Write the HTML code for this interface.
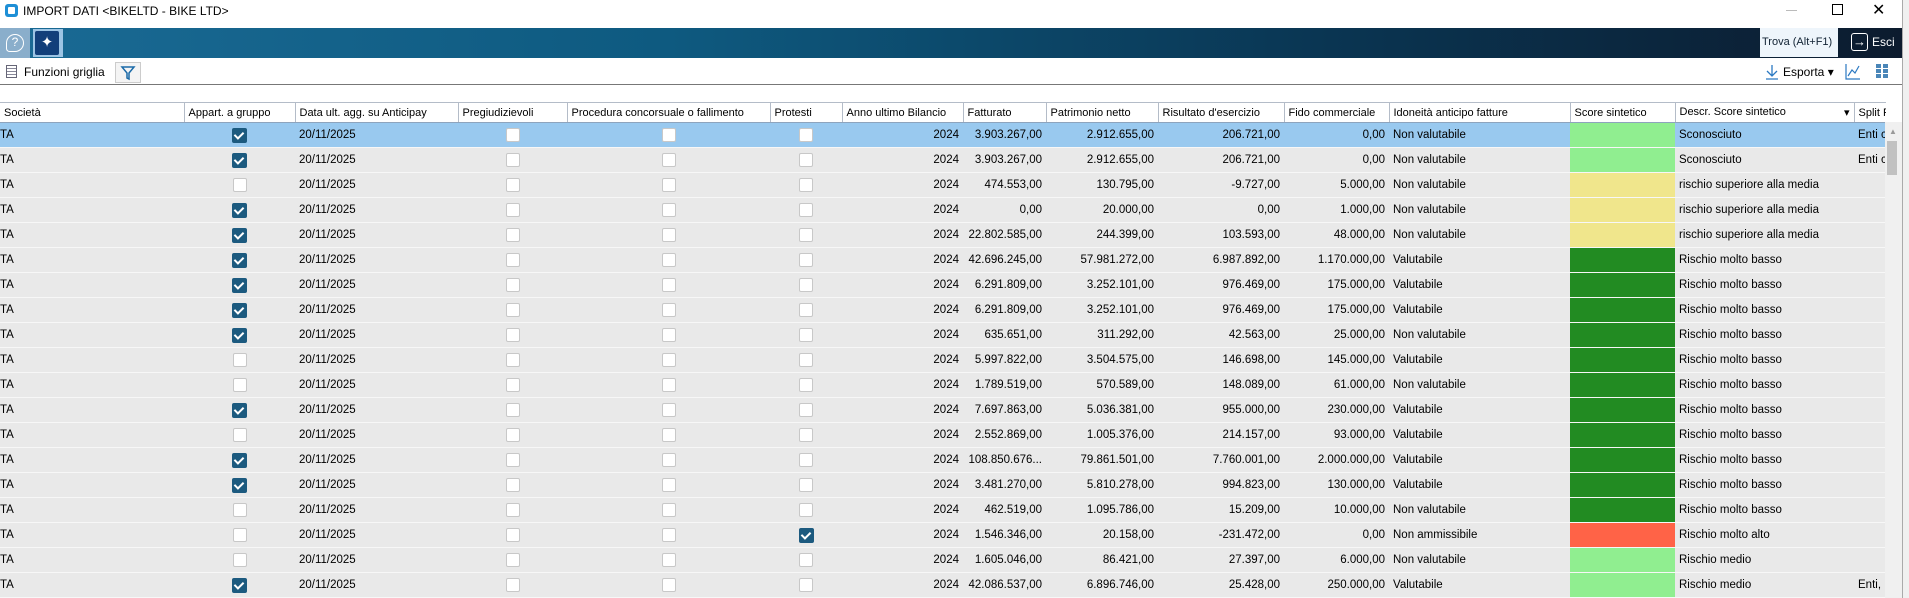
<!DOCTYPE html>
<html><head><meta charset="utf-8"><style>
*{margin:0;padding:0;box-sizing:border-box}
body{width:1909px;height:598px;overflow:hidden;background:#fff;font-family:"Liberation Sans",Arial,sans-serif;font-size:12px;color:#000;position:relative}
.abs{position:absolute;white-space:nowrap}
#band{left:0;top:28px;width:1902px;height:30px;background:linear-gradient(90deg,#1a6a94 0%,#0e5a80 35%,#0a3552 70%,#0c1b2e 100%)}
table{position:absolute;left:0;top:102px;border-collapse:collapse;table-layout:fixed;width:1886px}
th{height:20px;font-weight:normal;text-align:left;padding:0 4px;border-right:1px solid #b4bcc8;border-top:1px solid #b4bcc8;border-bottom:1px solid #8ea4bd;white-space:nowrap;overflow:hidden;background:#fff;font-size:11px}
td{height:25px;background:#e9e9e9;border-bottom:1px solid #f7f7f7;padding:0 4px;white-space:nowrap;overflow:hidden;font-size:11.5px;vertical-align:middle}
td:first-child{padding-left:0}
tr.sel td{background:#99c9ef}
.r{text-align:right}
.c{text-align:center;padding:0}
.cb{display:inline-block;width:14px;height:14px;border:1px solid #c8c8c8;background:#fff;border-radius:2px;vertical-align:middle}
.ck{display:inline-block;width:15px;height:15px;background:#1c5a7f;border-radius:2px;vertical-align:middle;position:relative}
.ck:after{content:"";position:absolute;left:4px;top:2px;width:4px;height:7px;border:solid #fff;border-width:0 2px 2px 0;transform:rotate(45deg)}
.lg{background:#90ee90!important}.kh{background:#f0e68c!important}.fg{background:#228b22!important}.tm{background:#ff6347!important}
</style></head><body>
<div class="abs" style="left:5px;top:4px;width:13px;height:13px;background:#1e8fd6;border-radius:3px"></div>
<div class="abs" style="left:8px;top:7px;width:7px;height:7px;background:#fff;border-radius:1px"></div>
<div class="abs" style="left:23px;top:4px;font-size:12px">IMPORT DATI &lt;BIKELTD - BIKE LTD&gt;</div>
<div class="abs" style="left:1786px;top:10px;width:11px;height:1px;background:#bbb"></div>
<div class="abs" style="left:1832px;top:4px;width:11px;height:11px;border:1px solid #000"></div>
<div class="abs" style="left:1872px;top:0px;font-size:16px">✕</div>
<div id="band" class="abs"></div>
<div class="abs" style="left:0;top:28px;width:30px;height:30px;background:#8aaecb"></div>
<div class="abs" style="left:6px;top:34px;width:18px;height:18px;border:1.5px solid #fff;border-radius:50% 50% 50% 20%;color:#fff;font-size:12px;text-align:center;line-height:15px">?</div>
<div class="abs" style="left:33px;top:29px;width:30px;height:28px;background:#9cc4e4"></div>
<div class="abs" style="left:35px;top:31px;width:24px;height:24px;background:#123f7a;border-radius:2px;color:#fff;font-size:15px;text-align:center;line-height:24px">✦</div>
<div class="abs" style="left:1760px;top:28px;width:78px;height:29px;background:#eef5fb;color:#123;line-height:29px;padding-left:2px;font-size:11px">Trova (Alt+F1)</div>
<div class="abs" style="left:1851px;top:33px;width:17px;height:18px;border:1.5px solid #fff;border-radius:3px;color:#fff;font-size:13px;line-height:15px;text-align:center">→</div>
<div class="abs" style="left:1872px;top:35px;color:#fff;font-size:12px">Esci</div>
<div class="abs" style="left:1902px;top:0;width:7px;height:598px;background:#f0f0f0;border-left:1px solid #aaa"></div>
<div class="abs" style="left:6px;top:65px;width:11px;height:13px;border:1px solid #667;background:repeating-linear-gradient(#fff 0 2px,#889 2px 3px)"></div>
<div class="abs" style="left:24px;top:65px;font-size:12px">Funzioni griglia</div>
<div class="abs" style="left:115px;top:62px;width:26px;height:21px;border:1px solid #ccc;background:#f4f4f4"></div>
<svg class="abs" style="left:120px;top:65px" width="16" height="16"><path d="M2 2h12l-5 6v6l-2-1V8z" fill="none" stroke="#1a6aa8" stroke-width="1.5"/></svg>
<svg class="abs" style="left:1765px;top:64px" width="14" height="16"><path d="M7 1v11M2 7l5 5 5-5M1 15h12" fill="none" stroke="#2b79c2" stroke-width="1.3"/></svg>
<div class="abs" style="left:1783px;top:65px;font-size:12px">Esporta ▾</div>
<svg class="abs" style="left:1845px;top:63px" width="16" height="18"><path d="M1 1v15h14M3 13l4-6 3 3 4-7" fill="none" stroke="#2b79c2" stroke-width="1.2"/></svg>
<svg class="abs" style="left:1876px;top:64px" width="14" height="15"><g fill="#4a86b8"><rect x="0" y="0" width="5" height="4"/><rect x="7" y="0" width="5" height="4"/><rect x="0" y="5" width="5" height="4"/><rect x="7" y="5" width="5" height="4"/><rect x="0" y="10" width="5" height="4"/><rect x="7" y="10" width="5" height="4"/></g></svg>
<div class="abs" style="left:0;top:84px;width:1902px;height:1px;background:#777"></div>
<table>
<colgroup><col style="width:184px"><col style="width:111px"><col style="width:163px"><col style="width:109px"><col style="width:203px"><col style="width:72px"><col style="width:121px"><col style="width:83px"><col style="width:112px"><col style="width:126px"><col style="width:105px"><col style="width:181px"><col style="width:105px"><col style="width:179px"><col style="width:32px"></colgroup>
<tr><th>Società</th><th>Appart. a gruppo</th><th>Data ult. agg. su Anticipay</th><th>Pregiudizievoli</th><th>Procedura concorsuale o fallimento</th><th>Protesti</th><th>Anno ultimo Bilancio</th><th>Fatturato</th><th>Patrimonio netto</th><th>Risultato d'esercizio</th><th>Fido commerciale</th><th>Idoneità anticipo fatture</th><th>Score sintetico</th><th>Descr. Score sintetico<span style="float:right">▾</span></th><th style="border-right:none">Split Pay</th></tr>
<tr class="sel"><td>TA</td><td class="c"><span class="ck"></span></td><td>20/11/2025</td><td class="c"><span class="cb"></span></td><td class="c"><span class="cb"></span></td><td class="c"><span class="cb"></span></td><td class="r">2024</td><td class="r">3.903.267,00</td><td class="r">2.912.655,00</td><td class="r">206.721,00</td><td class="r">0,00</td><td>Non valutabile</td><td class="lg"></td><td>Sconosciuto</td><td>Enti c</td></tr>
<tr><td>TA</td><td class="c"><span class="ck"></span></td><td>20/11/2025</td><td class="c"><span class="cb"></span></td><td class="c"><span class="cb"></span></td><td class="c"><span class="cb"></span></td><td class="r">2024</td><td class="r">3.903.267,00</td><td class="r">2.912.655,00</td><td class="r">206.721,00</td><td class="r">0,00</td><td>Non valutabile</td><td class="lg"></td><td>Sconosciuto</td><td>Enti c</td></tr>
<tr><td>TA</td><td class="c"><span class="cb"></span></td><td>20/11/2025</td><td class="c"><span class="cb"></span></td><td class="c"><span class="cb"></span></td><td class="c"><span class="cb"></span></td><td class="r">2024</td><td class="r">474.553,00</td><td class="r">130.795,00</td><td class="r">-9.727,00</td><td class="r">5.000,00</td><td>Non valutabile</td><td class="kh"></td><td>rischio superiore alla media</td><td></td></tr>
<tr><td>TA</td><td class="c"><span class="ck"></span></td><td>20/11/2025</td><td class="c"><span class="cb"></span></td><td class="c"><span class="cb"></span></td><td class="c"><span class="cb"></span></td><td class="r">2024</td><td class="r">0,00</td><td class="r">20.000,00</td><td class="r">0,00</td><td class="r">1.000,00</td><td>Non valutabile</td><td class="kh"></td><td>rischio superiore alla media</td><td></td></tr>
<tr><td>TA</td><td class="c"><span class="ck"></span></td><td>20/11/2025</td><td class="c"><span class="cb"></span></td><td class="c"><span class="cb"></span></td><td class="c"><span class="cb"></span></td><td class="r">2024</td><td class="r">22.802.585,00</td><td class="r">244.399,00</td><td class="r">103.593,00</td><td class="r">48.000,00</td><td>Non valutabile</td><td class="kh"></td><td>rischio superiore alla media</td><td></td></tr>
<tr><td>TA</td><td class="c"><span class="ck"></span></td><td>20/11/2025</td><td class="c"><span class="cb"></span></td><td class="c"><span class="cb"></span></td><td class="c"><span class="cb"></span></td><td class="r">2024</td><td class="r">42.696.245,00</td><td class="r">57.981.272,00</td><td class="r">6.987.892,00</td><td class="r">1.170.000,00</td><td>Valutabile</td><td class="fg"></td><td>Rischio molto basso</td><td></td></tr>
<tr><td>TA</td><td class="c"><span class="ck"></span></td><td>20/11/2025</td><td class="c"><span class="cb"></span></td><td class="c"><span class="cb"></span></td><td class="c"><span class="cb"></span></td><td class="r">2024</td><td class="r">6.291.809,00</td><td class="r">3.252.101,00</td><td class="r">976.469,00</td><td class="r">175.000,00</td><td>Valutabile</td><td class="fg"></td><td>Rischio molto basso</td><td></td></tr>
<tr><td>TA</td><td class="c"><span class="ck"></span></td><td>20/11/2025</td><td class="c"><span class="cb"></span></td><td class="c"><span class="cb"></span></td><td class="c"><span class="cb"></span></td><td class="r">2024</td><td class="r">6.291.809,00</td><td class="r">3.252.101,00</td><td class="r">976.469,00</td><td class="r">175.000,00</td><td>Valutabile</td><td class="fg"></td><td>Rischio molto basso</td><td></td></tr>
<tr><td>TA</td><td class="c"><span class="ck"></span></td><td>20/11/2025</td><td class="c"><span class="cb"></span></td><td class="c"><span class="cb"></span></td><td class="c"><span class="cb"></span></td><td class="r">2024</td><td class="r">635.651,00</td><td class="r">311.292,00</td><td class="r">42.563,00</td><td class="r">25.000,00</td><td>Non valutabile</td><td class="fg"></td><td>Rischio molto basso</td><td></td></tr>
<tr><td>TA</td><td class="c"><span class="cb"></span></td><td>20/11/2025</td><td class="c"><span class="cb"></span></td><td class="c"><span class="cb"></span></td><td class="c"><span class="cb"></span></td><td class="r">2024</td><td class="r">5.997.822,00</td><td class="r">3.504.575,00</td><td class="r">146.698,00</td><td class="r">145.000,00</td><td>Valutabile</td><td class="fg"></td><td>Rischio molto basso</td><td></td></tr>
<tr><td>TA</td><td class="c"><span class="cb"></span></td><td>20/11/2025</td><td class="c"><span class="cb"></span></td><td class="c"><span class="cb"></span></td><td class="c"><span class="cb"></span></td><td class="r">2024</td><td class="r">1.789.519,00</td><td class="r">570.589,00</td><td class="r">148.089,00</td><td class="r">61.000,00</td><td>Non valutabile</td><td class="fg"></td><td>Rischio molto basso</td><td></td></tr>
<tr><td>TA</td><td class="c"><span class="ck"></span></td><td>20/11/2025</td><td class="c"><span class="cb"></span></td><td class="c"><span class="cb"></span></td><td class="c"><span class="cb"></span></td><td class="r">2024</td><td class="r">7.697.863,00</td><td class="r">5.036.381,00</td><td class="r">955.000,00</td><td class="r">230.000,00</td><td>Valutabile</td><td class="fg"></td><td>Rischio molto basso</td><td></td></tr>
<tr><td>TA</td><td class="c"><span class="cb"></span></td><td>20/11/2025</td><td class="c"><span class="cb"></span></td><td class="c"><span class="cb"></span></td><td class="c"><span class="cb"></span></td><td class="r">2024</td><td class="r">2.552.869,00</td><td class="r">1.005.376,00</td><td class="r">214.157,00</td><td class="r">93.000,00</td><td>Valutabile</td><td class="fg"></td><td>Rischio molto basso</td><td></td></tr>
<tr><td>TA</td><td class="c"><span class="ck"></span></td><td>20/11/2025</td><td class="c"><span class="cb"></span></td><td class="c"><span class="cb"></span></td><td class="c"><span class="cb"></span></td><td class="r">2024</td><td class="r">108.850.676...</td><td class="r">79.861.501,00</td><td class="r">7.760.001,00</td><td class="r">2.000.000,00</td><td>Valutabile</td><td class="fg"></td><td>Rischio molto basso</td><td></td></tr>
<tr><td>TA</td><td class="c"><span class="ck"></span></td><td>20/11/2025</td><td class="c"><span class="cb"></span></td><td class="c"><span class="cb"></span></td><td class="c"><span class="cb"></span></td><td class="r">2024</td><td class="r">3.481.270,00</td><td class="r">5.810.278,00</td><td class="r">994.823,00</td><td class="r">130.000,00</td><td>Valutabile</td><td class="fg"></td><td>Rischio molto basso</td><td></td></tr>
<tr><td>TA</td><td class="c"><span class="cb"></span></td><td>20/11/2025</td><td class="c"><span class="cb"></span></td><td class="c"><span class="cb"></span></td><td class="c"><span class="cb"></span></td><td class="r">2024</td><td class="r">462.519,00</td><td class="r">1.095.786,00</td><td class="r">15.209,00</td><td class="r">10.000,00</td><td>Non valutabile</td><td class="fg"></td><td>Rischio molto basso</td><td></td></tr>
<tr><td>TA</td><td class="c"><span class="cb"></span></td><td>20/11/2025</td><td class="c"><span class="cb"></span></td><td class="c"><span class="cb"></span></td><td class="c"><span class="ck"></span></td><td class="r">2024</td><td class="r">1.546.346,00</td><td class="r">20.158,00</td><td class="r">-231.472,00</td><td class="r">0,00</td><td>Non ammissibile</td><td class="tm"></td><td>Rischio molto alto</td><td></td></tr>
<tr><td>TA</td><td class="c"><span class="cb"></span></td><td>20/11/2025</td><td class="c"><span class="cb"></span></td><td class="c"><span class="cb"></span></td><td class="c"><span class="cb"></span></td><td class="r">2024</td><td class="r">1.605.046,00</td><td class="r">86.421,00</td><td class="r">27.397,00</td><td class="r">6.000,00</td><td>Non valutabile</td><td class="lg"></td><td>Rischio medio</td><td></td></tr>
<tr><td>TA</td><td class="c"><span class="ck"></span></td><td>20/11/2025</td><td class="c"><span class="cb"></span></td><td class="c"><span class="cb"></span></td><td class="c"><span class="cb"></span></td><td class="r">2024</td><td class="r">42.086.537,00</td><td class="r">6.896.746,00</td><td class="r">25.428,00</td><td class="r">250.000,00</td><td>Valutabile</td><td class="lg"></td><td>Rischio medio</td><td>Enti,</td></tr>
</table>
<div class="abs" style="left:1885px;top:122px;width:17px;height:476px;background:#f0f0f0"></div>
<div class="abs" style="left:1889px;top:127px;color:#999;font-size:8px">▲</div>
<div class="abs" style="left:1887px;top:141px;width:10px;height:34px;background:#c1c1c1"></div>
</body></html>
